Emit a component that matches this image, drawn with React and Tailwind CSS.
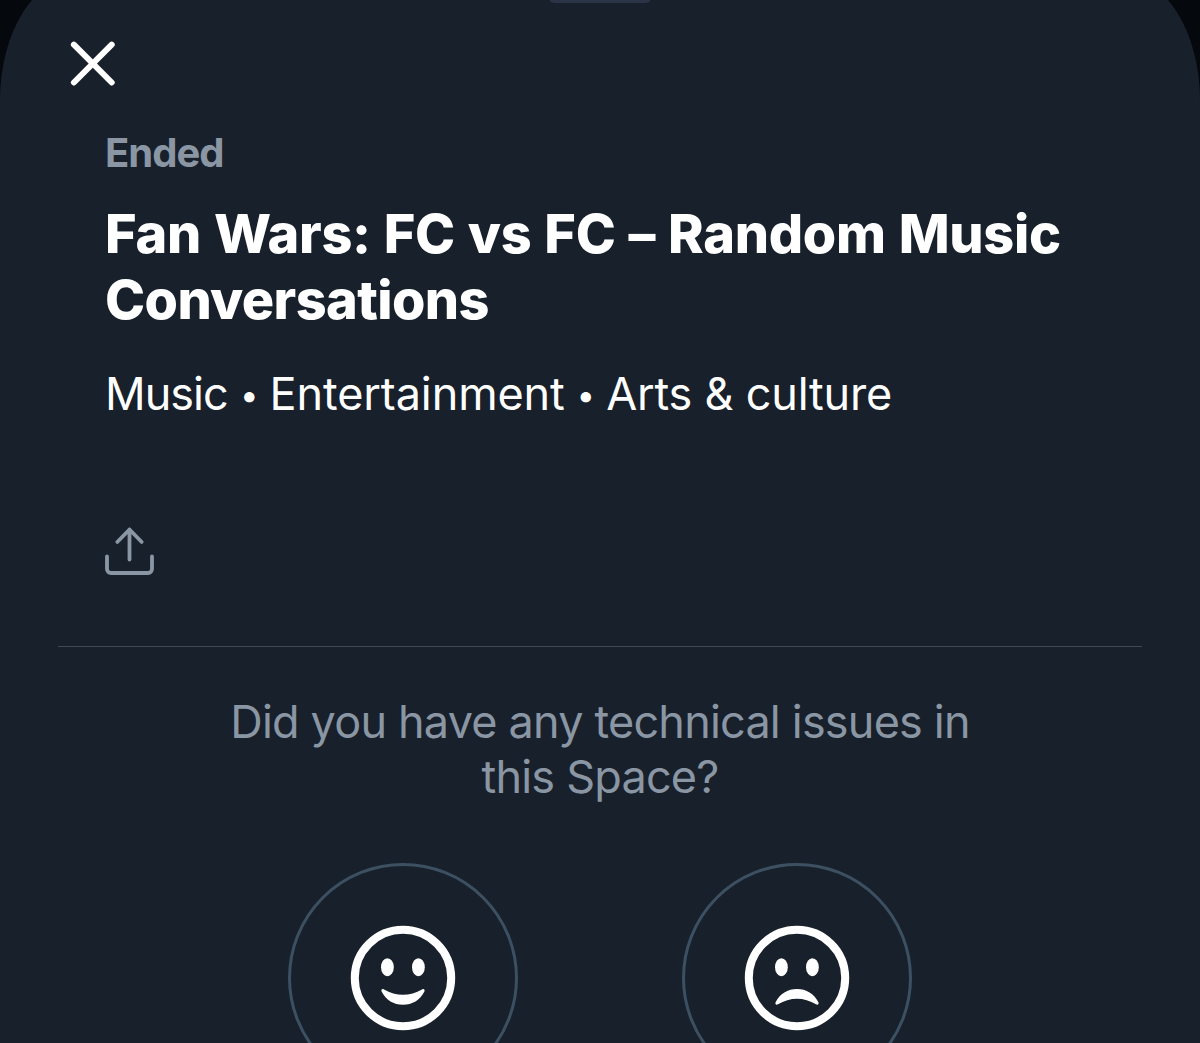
import React from 'react';

const CloseIcon = () => (
  <svg viewBox="0 0 46 46" className="w-[46px] h-[46px]" fill="none" stroke="currentColor" strokeWidth="6" strokeLinecap="round">
    <path d="M3.9 3.7 41.7 41.5M41.7 3.7 3.9 41.5" />
  </svg>
);

const ShareIcon = () => (
  <svg
    viewBox="0 0 50 50"
    className="w-[50px] h-[50px]"
    fill="none"
    stroke="currentColor"
    strokeWidth="3.8"
    strokeLinecap="round"
    strokeLinejoin="round"
  >
    <path d="M24.5 33.5V3.5M12.3 16 24.5 3.5l12.2 12.5" />
    <path d="M2 30.5v12.5a4 4 0 0 0 4 4h37a4 4 0 0 0 4-4v-12.5" />
  </svg>
);

const Dot = () => <span className="text-[33px] pt-px">•</span>;

const Face = ({ mouth }) => (
  <svg viewBox="0 0 106 106" className="w-[106px] h-[106px]">
    <circle cx="53" cy="53" r="48.2" fill="none" stroke="currentColor" strokeWidth="8" />
    <ellipse cx="37.4" cy="42.2" rx="6.4" ry="9" fill="currentColor" />
    <ellipse cx="68.4" cy="42.2" rx="6.4" ry="9" fill="currentColor" />
    <path d={mouth} fill="currentColor" />
  </svg>
);

const happyMouth = 'M34 64.4C46 71.6 60 71.6 72 64.4C73.8 63.4 75.2 64.6 74.4 66.4C70 75 62.4 79.7 53 79.7C43.6 79.7 36 75 31.6 66.4C30.8 64.6 32.2 63.4 34 64.4Z';
const sadMouth = 'M34 79.3C46 71.8 60 71.8 72 79.3C73.8 80.3 75.2 79.1 74.4 77.3C70 68.5 62.4 63.9 53 63.9C43.6 63.9 36 68.5 31.6 77.3C30.8 79.1 32.2 80.3 34 79.3Z';

const FeedbackButton = ({ label, mouth }) => (
  <button
    type="button"
    aria-label={label}
    className="w-[230px] h-[230px] rounded-full border-3 border-[#3d5062] flex items-center justify-center text-white"
  >
    <Face mouth={mouth} />
  </button>
);

const App = () => {
  return (
    <div className="h-[1043px] overflow-hidden bg-[#05080c] font-['Inter',sans-serif]">
      {/* the sheet starts above the top edge, so only part of its corners show */}
      <div className="-mt-[25px] h-[1300px] rounded-t-[80px_125px] bg-[#18202b] flex flex-col">
        <div className="mt-[18px] w-[102px] h-[10px] shrink-0 rounded-full bg-[#2b3347] self-center" />

        <button type="button" aria-label="Close" className="mt-[38px] ml-[70px] w-[46px] h-[46px] text-white">
          <CloseIcon />
        </button>

        <div className="px-[105px]">
          <p className="mt-[41px] text-[40px] leading-[50px] tracking-[-1px] font-bold text-[#8a96a3]">Ended</p>
          <h1 className="mt-[23px] text-[54px] leading-[66px] font-extrabold text-white whitespace-nowrap">
            <span className="tracking-[-0.3px] [word-spacing:1.4px]">Fan Wars: FC vs FC – Random Music</span>
            <br />
            <span className="tracking-[-0.6px]">Conversations</span>
          </h1>
          <p className="mt-[33px] flex text-[45px] leading-[56px] text-white whitespace-nowrap">
            <span className="w-[135px] tracking-[-1px]">Music</span>
            <Dot />
            <span className="ml-[11px] w-[307px] tracking-[-0.1px]">Entertainment</span>
            <Dot />
            <span className="ml-[11px] tracking-[-0.2px]">Arts &amp; culture</span>
          </p>
          <button type="button" aria-label="Share" className="mt-[103px] block text-[#8a96a3]">
            <ShareIcon />
          </button>
        </div>

        <hr className="mt-[70px] mx-[58px] border-t border-[#414957]" />

        <p className="mt-[47px] text-center text-[45px] leading-[55px] tracking-[-0.8px] text-[#8a96a3]">
          Did you have any technical issues in
          <br />
          this Space?
        </p>

        <div className="mt-[59px] flex justify-center gap-[164px]">
          <FeedbackButton label="No issues" mouth={happyMouth} />
          <FeedbackButton label="Had issues" mouth={sadMouth} />
        </div>
      </div>
    </div>
  );
};

export default App;
